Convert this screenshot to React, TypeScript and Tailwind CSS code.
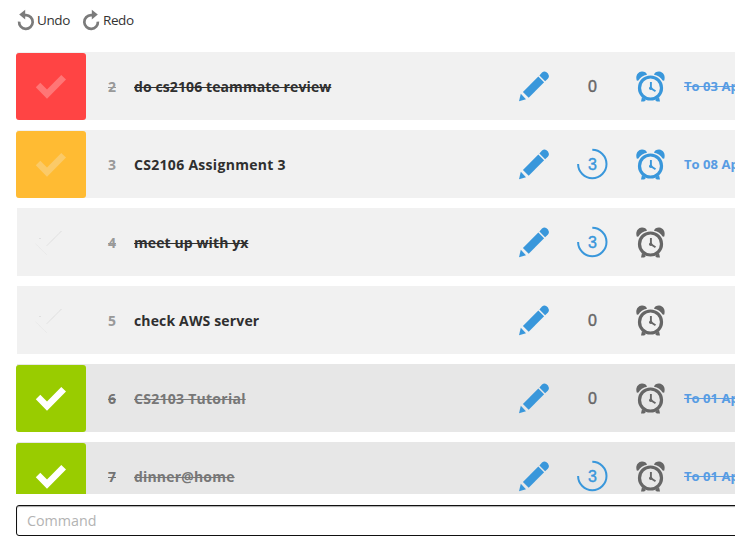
import React from "react";

type Task = {
  id: number;
  title: string;
  box: string;
  check: string;
  done?: boolean;
  struck?: boolean;
  tracking: string;
  reminders: number;
  alarm?: boolean;
  due?: string;
};

const tasks: Task[] = [
  { id: 2, title: "do cs2106 teammate review", tracking: "tracking-[0.1px]", box: "bg-[#ff4444]", check: "text-[#ff7676]", struck: true, reminders: 0, alarm: true, due: "To 03 Apr" },
  { id: 3, title: "CS2106 Assignment 3", tracking: "tracking-[0.3px]", box: "bg-[#ffbb33]", check: "text-[#fbca68]", reminders: 3, alarm: true, due: "To 08 Apr" },
  { id: 4, title: "meet up with yx", tracking: "tracking-[0.1px]", box: "", check: "", struck: true, reminders: 3 },
  { id: 5, title: "check AWS server", tracking: "tracking-[0.15px]", box: "", check: "", reminders: 0 },
  { id: 6, title: "CS2103 Tutorial", tracking: "tracking-[0.27px]", box: "bg-[#99cc00]", check: "text-white", done: true, struck: true, reminders: 0, due: "To 01 Apr" },
  { id: 7, title: "dinner@home", tracking: "tracking-[0.18px]", box: "bg-[#99cc00]", check: "text-white", done: true, struck: true, reminders: 3, due: "To 01 Apr" },
];

function UndoIcon({ flip = false }: { flip?: boolean }) {
  return (
    <svg width="18" height="22" viewBox="0 0 18 22" className={flip ? "-scale-x-100" : ""}>
      <path d="M7 6.2H9A6.8 6.8 0 1 1 2.1 12.6" fill="none" stroke="#7b7b7b" strokeWidth="2.7" />
      <path d="M8.2.8v9.8L2.2 5.6z" fill="#7b7b7b" />
    </svg>
  );
}

function Check({ className }: { className: string }) {
  if (!className) {
    return (
      <svg width="32" height="26" viewBox="0 0 32 26" fill="none">
        <path d="M12 15.5 26.5 1" stroke="#c9c9c9" strokeWidth="0.7" strokeDasharray="1 0.6" />
        <path d="M.8 14 11.5 24.5" stroke="#e2e2e2" strokeWidth="0.8" strokeDasharray="1 0.6" />
        <path d="M4.5 8.5h1" stroke="#ccc" />
      </svg>
    );
  }
  return (
    <svg width="32" height="26" viewBox="0 0 32 26" className={className}>
      <path d="M.8 13.2 5.3 8.8 12 15.4 26.3 1 31 5.4 12 24.8z" fill="currentColor" />
    </svg>
  );
}

function Pencil() {
  return (
    <svg width="30" height="31" viewBox="0 0 30 31" fill="#3997db">
      <path d="M20.4 4.4 23 1.6Q25 0 27.2 1 29.4 2.2 29.9 4.8 30.1 6.5 28.8 7.7L26.1 10.3z" />
      <path d="M19.3 5.5 25.1 11.3 9.7 26.7 3.9 20.9z" />
      <path d="M1.8 22.8 7 28.3 0 30.3z" />
    </svg>
  );
}

function Alarm({ active }: { active?: boolean }) {
  return (
    <svg width="30" height="31" viewBox="0 0 30 31" className={active ? "text-[#3997db]" : "text-[#666666]"}>
      <g fill="currentColor">
        <path d="M.9 9.8C-1 5 1.8.6 5.8.4 8.4.3 10.4 1.4 11 3.7Q5 4.8 2.4 9.6z" />
        <path d="M28.1 9.8C30 5 27.2.6 23.2.4 20.6.3 18.6 1.4 18 3.7Q24 4.8 26.6 9.6z" />
        <path d="M6 26 10 29 8.2 30.6H5zM23 26 19 29 20.8 30.6H24z" />
      </g>
      <circle cx="14.5" cy="17" r="11" fill="none" stroke="currentColor" strokeWidth="3.2" />
      <path d="M14.9 11v6.3L19.5 20.3" fill="none" stroke="currentColor" strokeWidth="1.9" />
      <circle cx="14.7" cy="17.3" r="1.7" fill="currentColor" />
    </svg>
  );
}

function Reminders({ count }: { count: number }) {
  const digit = count ? "text-[#3997db]" : "text-[#666666]";
  return (
    <div className="grid h-8 w-8 place-items-center">
      {count > 0 && (
        <svg width="32" height="32" viewBox="0 0 32 32" className="col-start-1 row-start-1">
          <path d="M16.3 1.8A14.2 14.2 0 1 1 2.1 16" fill="none" stroke="#3997db" strokeWidth="2" />
        </svg>
      )}
      <span className={`col-start-1 row-start-1 pl-px pt-px font-['Liberation_Sans',sans-serif] text-[16px] font-normal leading-4 [-webkit-text-stroke:0.4px_currentColor] ${digit}`}>
        {count}
      </span>
    </div>
  );
}

function Row({ task }: { task: Task }) {
  const line = task.struck ? "line-through decoration-1" : "";
  const bg = task.done ? "bg-[#e7e7e7]" : "bg-[#f1f1f1]";
  const idColor = task.done ? "text-[#737373]" : "text-[#999999]";
  return (
    <div className={`ml-[17px] flex h-[68px] shrink-0 items-center whitespace-nowrap font-['Open_Sans','Noto_Sans',sans-serif] text-[14px] font-bold ${bg}`}>
      <div className={`-ml-px mt-px flex h-[67px] w-[70px] shrink-0 items-center justify-center rounded-[3px] ${task.box}`}>
        <Check className={task.check} />
      </div>
      <span className={`ml-[22px] w-[26px] shrink-0 ${line} ${idColor}`}>{task.id}</span>
      <span className="w-[385px] shrink-0">
        <span className={`${line} ${task.tracking} ${task.done ? "text-[#777777]" : "text-[#2f2f2f]"}`}>{task.title}</span>
      </span>
      <div className="flex w-[165px] shrink-0 items-center">
        <Pencil />
        <div className="ml-[27px] mr-[28px]">
          <Reminders count={task.reminders} />
        </div>
        <Alarm active={task.alarm} />
      </div>
      <span className={`pt-px text-[13px] tracking-[0.05px] text-[#579ce3] ${line}`}>{task.due}</span>
    </div>
  );
}

export default function App() {
  return (
    <div className="flex h-[546px] w-[735px] flex-col overflow-hidden bg-white font-['Open_Sans','Noto_Sans',sans-serif]">
      <header className="flex h-[52px] shrink-0 items-start pl-[17px] pt-[9px] text-[13.5px] leading-[22px] text-[#333]">
        <button className="flex w-[65px] items-start gap-[2px]"><UndoIcon /><span className="tracking-[-0.4px]">Undo</span></button>
        <button className="flex items-start gap-[3px]"><UndoIcon flip /><span className="tracking-[-0.4px]">Redo</span></button>
      </header>
      <main className="flex h-[442px] shrink-0 flex-col gap-[10px] overflow-hidden">
        {tasks.map((task) => <Row key={task.id} task={task} />)}
      </main>
      <footer className="pl-4 pt-[11px]">
        <input
          placeholder="Command"
          className="block h-[31px] w-[740px] rounded-[3px] border border-[#111] bg-white px-[10px] text-[14.3px] shadow-[inset_0_1px_1px_#aaa] placeholder:text-[#b3b3b3] placeholder:opacity-100"
        />
      </footer>
    </div>
  );
}
